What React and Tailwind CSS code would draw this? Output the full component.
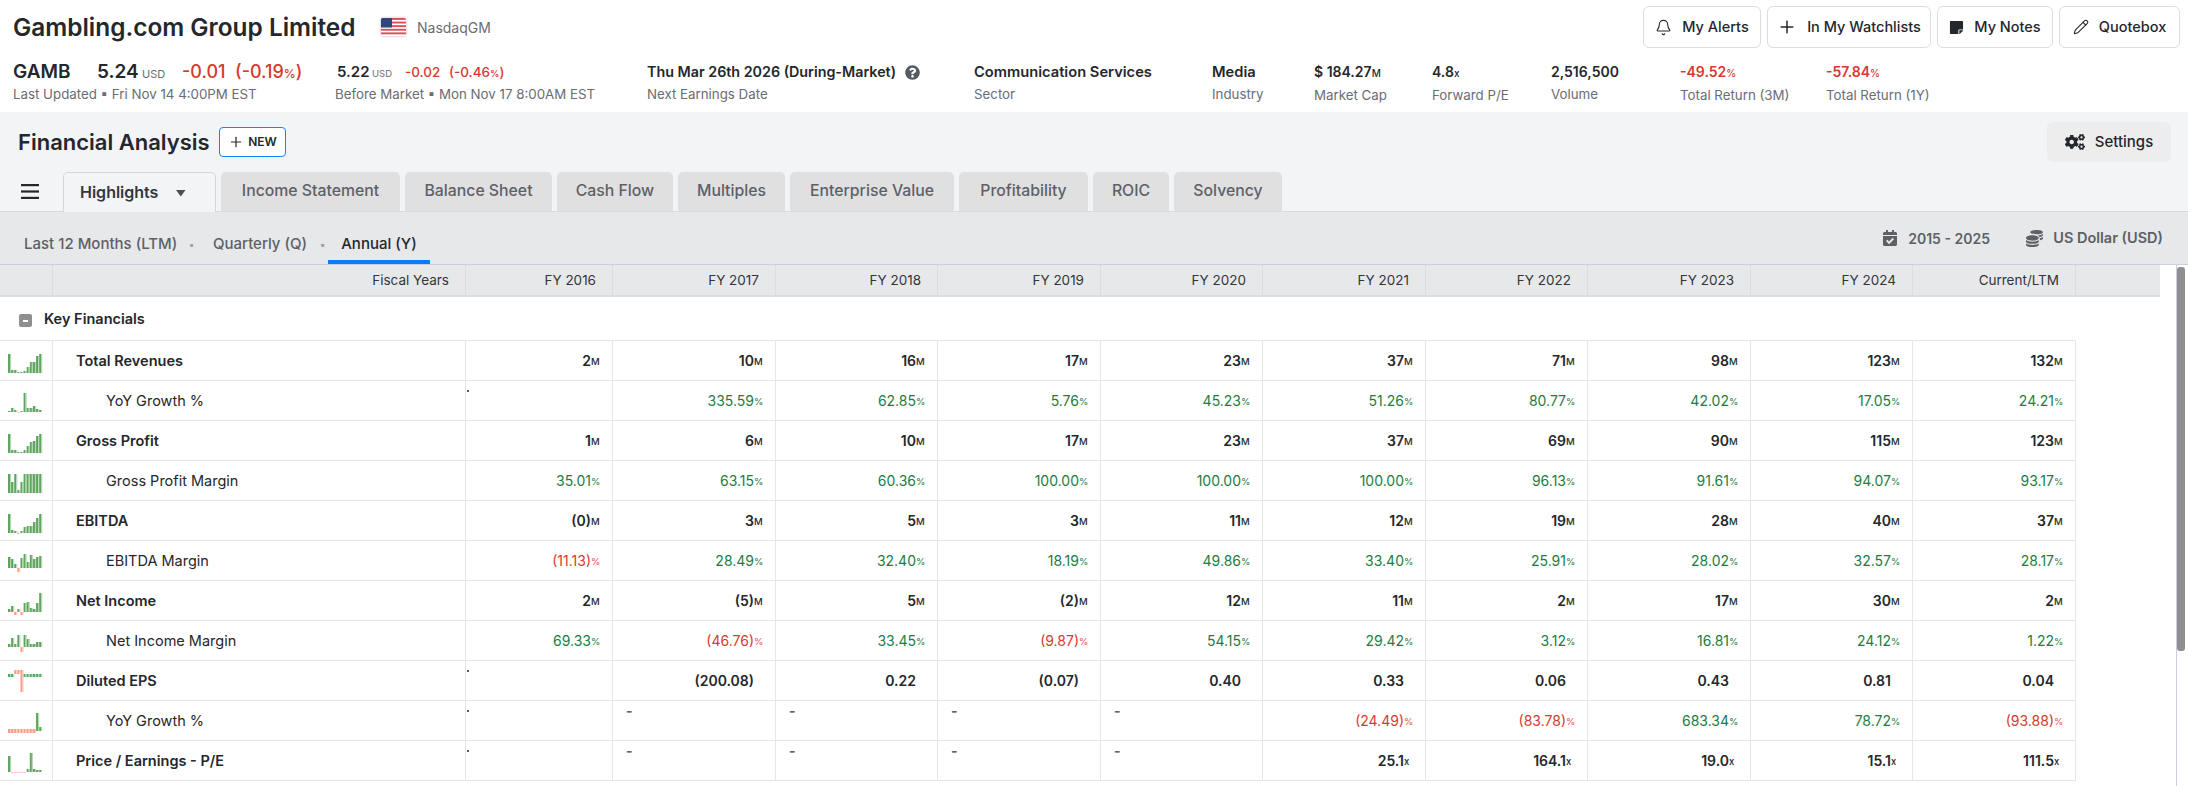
import React from "react";
import { Bell, Plus, Pencil } from "lucide-react";
import { FaStickyNote, FaCogs, FaCalendarCheck, FaCoins, FaQuestionCircle } from "react-icons/fa";

function Spark({ base = 32, bars }) {
  return (
    <svg width="52" height="39" viewBox="0 0 52 39" className="block">
      {bars.map((v, i) => {
        const x = 8 + i * 3.12;
        let y, h, neg;
        if (Array.isArray(v)) {
          [y, h] = v;
          neg = v[2] === "r";
        } else {
          neg = v < 0;
          h = Math.abs(v);
          y = neg ? base : base - h;
        }
        return (
          <g key={i}>
            <rect x={x} y={y} width="2" height={h} fill={neg ? "#ff9a86" : "#5ea55e"} />
            <rect x={x + 2} y={y} width="1.1" height={h} fill={neg ? "#ffc9bd" : "#b4d6b4"} />
          </g>
        );
      })}
    </svg>
  );
}

function Val({ v, u, tone, bold }) {
  const color = tone === "g" ? "text-[#1c7d43]" : tone === "r" ? "text-[#d8392f]" : "text-[#24272c]";
  return (
    <div className="flex items-center justify-end h-full pr-[11px]">
      <span className={`text-[14px] ${bold ? "font-semibold" : "font-normal"} ${color}`}>{v}</span>
      <span className={`w-[10px] text-left text-[9.5px] leading-none mt-[3px] ${bold ? "font-medium" : "font-normal"} ${tone === "r" ? "text-[#e0574c]" : color}`}>{u}</span>
    </div>
  );
}

const COLS = "grid grid-cols-[53px_413px_147px_163px_162px_163px_162px_163px_162px_163px_162px_163px]";

const rows = [
  { label: "Total Revenues", bold: true, base: 32, bars: [19, 3, 3, 1, 1, 2, 6, 11, 11, 17, 19], u: "M",
    vals: ["2", "10", "16", "17", "23", "37", "71", "98", "123", "132"] },
  { label: "YoY Growth %", base: 31, bars: [1, 4, 2, -0.6, 1, 19, 4, 4, 6, 3, 2], u: "%",
    vals: [".", "335.59", "62.85", "5.76", "45.23", "51.26", "80.77", "42.02", "17.05", "24.21"] },
  { label: "Gross Profit", bold: true, base: 32, bars: [19, 3, 3, 1, 1, 3, 7, 11, 12, 17, 19], u: "M",
    vals: ["1", "6", "10", "17", "23", "37", "69", "90", "115", "123"] },
  { label: "Gross Profit Margin", base: 32, bars: [19, 11, 19, 3, 11, 19, 19, 19, 19, 19, 19], u: "%",
    vals: ["35.01", "63.15", "60.36", "100.00", "100.00", "100.00", "96.13", "91.61", "94.07", "93.17"] },
  { label: "EBITDA", bold: true, base: 32, bars: [19, 3, 2, -1, 2, 6, 7, 7, 11, 15, 19], u: "M",
    vals: ["(0)", "3", "5", "3", "11", "12", "19", "28", "40", "37"] },
  { label: "EBITDA Margin", base: 27, bars: [11, 9, 4, -4, 10, 14, 6, 13, 9, 11, 12], u: "%",
    vals: ["(11.13)", "28.49", "32.40", "18.19", "49.86", "33.40", "25.91", "28.02", "32.57", "28.17"] },
  { label: "Net Income", bold: true, base: 31, bars: [3, 6, -3, 3, -3, 9, 10, 4, 3, 9, 19], u: "M",
    vals: ["2", "(5)", "5", "(2)", "12", "11", "2", "17", "30", "2"] },
  { label: "Net Income Margin", base: 26, bars: [3, 9, 3, 12, -5, 12, 8, 3, 3, 5, 5], u: "%",
    vals: ["69.33", "(46.76)", "33.45", "(9.87)", "54.15", "29.42", "3.12", "16.81", "24.12", "1.22"] },
  { label: "Diluted EPS", bold: true, base: 12,
    bars: [[13, 3], [13, 3], [9, 4, "r"], [9, 4, "r"], [9, 22, "r"], [13, 3], [13, 3], [13, 3], [13, 3], [13, 3], [13, 3]], u: "",
    vals: [".", "(200.08)", "0.22", "(0.07)", "0.40", "0.33", "0.06", "0.43", "0.81", "0.04"] },
  { label: "YoY Growth %", base: 30,
    bars: [[28, 4, "r"], [28, 4, "r"], [28, 4, "r"], [28, 4, "r"], [28, 4, "r"], [28, 4, "r"], [28, 4, "r"], [28, 4, "r"], [28, 4, "r"], 18, 4], u: "%",
    vals: [".", "-", "-", "-", "-", "(24.49)", "(83.78)", "683.34", "78.72", "(93.88)"] },
  { label: "Price / Earnings - P/E", bold: true, base: 31, bars: [16, -0.6, -0.6, -0.6, -0.6, -0.6, 3, 19, 3, 2, 2], u: "x",
    vals: [".", "-", "-", "-", "-", "25.1", "164.1", "19.0", "15.1", "111.5"] },
];

function Cell({ row, v }) {
  if (v === ".") {
    return (
      <div className="h-full border-r border-[#e6e6e8] pt-[9px] pl-[1px]">
        <span className="block w-[2px] h-[2px] bg-[#55585e]"></span>
      </div>
    );
  }
  if (v === "-") {
    return (
      <div className="h-full border-r border-[#e6e6e8] pl-[13px] pt-[1px] text-[14px] leading-[18px] font-bold text-[#5f6268]">-</div>
    );
  }
  const neg = v.startsWith("(");
  const tone = row.bold ? undefined : neg ? "r" : "g";
  return (
    <div className="h-full border-r border-[#e6e6e8]">
      <Val v={v} u={row.u} tone={tone} bold={row.bold} />
    </div>
  );
}

function Stat({ w, value, unit, label, red, wide }) {
  return (
    <div className={w}>
      <div className={`${wide ? "text-[14.7px]" : "text-[14px]"} leading-[20px] font-semibold whitespace-nowrap ${red ? "text-[#d8392f]" : "text-[#24272c]"}`}>
        {value}
        {unit && <span className="text-[10px] font-medium">{unit}</span>}
      </div>
      <div className="text-[13.3px] leading-[20px] mt-[2px] text-[#696d74]">{label}</div>
    </div>
  );
}

const topBtn = "flex items-center justify-center gap-[10px] h-[42px] bg-white border border-[#dcdddf] rounded-[6px] text-[14.5px] font-medium text-[#24272c]";
const tabs = [
  ["Income Statement", "w-[179px]"],
  ["Balance Sheet", "w-[147px]"],
  ["Cash Flow", "w-[116px]"],
  ["Multiples", "w-[107px]"],
  ["Enterprise Value", "w-[164px]"],
  ["Profitability", "w-[129px]"],
  ["ROIC", "w-[76px]"],
  ["Solvency", "w-[108px]"],
];

export default function App() {
  return (
    <div className="w-[2188px] h-[786px] overflow-hidden bg-white flex flex-col font-['Inter','Liberation_Sans',sans-serif] text-[#24272c]">
      <header className="h-[112px] shrink-0 flex flex-col">
        <div className="h-[62px] shrink-0 flex items-start justify-between pl-[13px] pr-[8px] pt-[6px]">
          <div className="flex items-center h-[42px]">
            <h1 className="text-[24.4px] font-semibold leading-none w-[368px] whitespace-nowrap">Gambling.com Group Limited</h1>
            <svg width="25" height="18" viewBox="0 0 25 18" className="rounded-[2px] shadow-[0_0_3px_rgba(90,90,120,0.45)]">
              <rect width="25" height="18" fill="#fff" />
              {[0, 1, 2, 3, 4].map((i) => (
                <rect key={i} y={i * 3.6} width="25" height="1.9" fill="#d9505c" />
              ))}
              <rect width="11" height="9.5" fill="#33457c" />
            </svg>
            <span className="ml-[11px] text-[14px] text-[#696d74]">NasdaqGM</span>
          </div>
          <div className="flex gap-[6px]">
            <button className={`${topBtn} w-[118px]`}><Bell size={17} strokeWidth={1.6} />My Alerts</button>
            <button className={`${topBtn} w-[164px]`}><Plus size={20} strokeWidth={1.8} />In My Watchlists</button>
            <button className={`${topBtn} w-[116px]`}><FaStickyNote size={15} className="text-[#24272c]" />My Notes</button>
            <button className={`${topBtn} w-[121px]`}><Pencil size={16} strokeWidth={1.6} />Quotebox</button>
          </div>
        </div>
        <div className="flex pl-[13px]">
          <div className="w-[322px]">
            <div className="flex items-baseline h-[20px] text-[#24272c]">
              <span className="text-[19px] leading-[20px] font-semibold w-[84px]">GAMB</span>
              <span className="text-[19px] leading-[20px] font-semibold w-[45px]">5.24</span>
              <span className="text-[11px] text-[#696d74] w-[40px]">USD</span>
              <span className="text-[18px] leading-[20px] font-medium text-[#d8392f] w-[53px]">-0.01</span>
              <span className="text-[18px] leading-[20px] font-medium text-[#d8392f]">(-0.19<span className="text-[12px]">%</span>)</span>
            </div>
            <div className="text-[13.3px] leading-[20px] mt-[2px] text-[#696d74] whitespace-nowrap">Last Updated ▪ Fri Nov 14 4:00PM EST</div>
          </div>
          <div className="w-[312px]">
            <div className="flex items-baseline h-[20px] pl-[2px]">
              <span className="text-[15px] leading-[20px] font-semibold w-[35px]">5.22</span>
              <span className="text-[9.5px] text-[#696d74] w-[33px]">USD</span>
              <span className="text-[13.5px] leading-[20px] font-medium text-[#d8392f] w-[44px]">-0.02</span>
              <span className="text-[13.5px] leading-[20px] font-medium text-[#d8392f]">(-0.46<span className="text-[9.5px]">%</span>)</span>
            </div>
            <div className="text-[13.3px] leading-[20px] mt-[2px] text-[#696d74] whitespace-nowrap">Before Market ▪ Mon Nov 17 8:00AM EST</div>
          </div>
          <div className="w-[327px]">
            <div className="flex items-center gap-[9px] text-[14.3px] leading-[20px] font-semibold whitespace-nowrap">
              Thu Mar 26th 2026 (During-Market)
              <FaQuestionCircle size={15} className="text-[#565a62]" />
            </div>
            <div className="text-[13.3px] leading-[20px] mt-[2px] text-[#696d74]">Next Earnings Date</div>
          </div>
          <Stat w="w-[238px]" value="Communication Services" label="Sector" wide />
          <Stat w="w-[102px]" value="Media" label="Industry" wide />
          <Stat w="w-[118px]" value="$ 184.27" unit="M" label="Market Cap" />
          <Stat w="w-[119px]" value="4.8" unit="x" label="Forward P/E" />
          <Stat w="w-[129px]" value="2,516,500" label="Volume" />
          <Stat w="w-[146px]" value="-49.52" unit="%" label="Total Return (3M)" red />
          <Stat w="w-[150px]" value="-57.84" unit="%" label="Total Return (1Y)" red />
        </div>
      </header>

      <section className="h-[100px] shrink-0 bg-[#f3f4f6] flex flex-col border-b border-[#d9dadd]">
        <div className="h-[60px] shrink-0 flex items-start justify-between pl-[18px] pr-[17px] pt-[10px]">
          <div className="flex items-center h-[40px]">
            <h2 className="text-[22px] font-semibold leading-none w-[201px] whitespace-nowrap">Financial Analysis</h2>
            <button className="flex items-center gap-[4px] w-[67px] h-[30px] justify-center bg-white border border-[#1a82ff] rounded-[4px] text-[12px] font-semibold">
              <Plus size={16} strokeWidth={1.8} />NEW
            </button>
          </div>
          <button className="flex items-center justify-center gap-[10px] w-[124px] h-[40px] bg-[#ededee] rounded-[6px] text-[15px] font-medium">
            <FaCogs size={20} className="text-[#24272c]" />Settings
          </button>
        </div>
        <div className="flex items-end h-[39px] gap-[5px]">
          <div className="w-[63px] h-full flex items-center pl-[21px]">
            <svg width="18" height="15" viewBox="0 0 18 15">
              <rect width="18" height="2.2" fill="#24272c" />
              <rect y="6.4" width="18" height="2.2" fill="#24272c" />
              <rect y="12.8" width="18" height="2.2" fill="#24272c" />
            </svg>
          </div>
          <div className="-ml-[5px] w-[153px] h-[40px] -mb-[1px] pb-[2px] bg-[#f3f4f6] border border-b-0 border-[#d5d7da] rounded-t-[5px] flex items-center pl-[16px] text-[16px] font-semibold text-[#33363b] relative">
            Highlights
            <svg width="12" height="7" viewBox="0 0 12 7" className="ml-[17px] mt-[3px]"><path d="M1 0h9.5L5.8 6.5z" fill="#4a4d53" /></svg>
          </div>
          {tabs.map(([t, w]) => (
            <div key={t} className={`${w} h-full pb-[2px] bg-[#e0e0e1] rounded-t-[5px] flex items-center justify-center text-[15.8px] font-medium text-[#5d6067]`}>{t}</div>
          ))}
        </div>
      </section>

      <div className="h-[53px] shrink-0 bg-[#e7e8ea] border-b border-[#c9cfdc] flex justify-between pl-[24px] pr-[25px]">
        <div className="flex items-center h-full pt-[12px] text-[15px] font-medium text-[#5d6067]">
          <span className="w-[165px] whitespace-nowrap">Last 12 Months (LTM)</span>
          <span className="w-[24px] text-[10px] text-[#9a9da3]">▪</span>
          <span className="w-[107px] whitespace-nowrap">Quarterly (Q)</span>
          <span className="w-[23px] text-[10px] text-[#9a9da3]">▪</span>
          <span className="h-full w-[102px] -ml-[15px] pt-[4px] flex items-center justify-center whitespace-nowrap border-b-[4px] border-[#0a7cff] text-[#24272c]">Annual (Y)</span>
        </div>
        <div className="flex items-center h-full text-[14.5px] font-semibold text-[#5d6067]">
          <FaCalendarCheck size={16} className="mr-[10px]" />
          <span className="w-[118px] text-[14px] whitespace-nowrap">2015 - 2025</span>
          <FaCoins size={17} className="mr-[10px]" />
          <span className="whitespace-nowrap">US Dollar (USD)</span>
        </div>
      </div>

      <div className="flex-1 min-h-0 flex">
        <div className="w-[2176px] shrink-0">
          <div className="bg-[#e7e8ea] border-b-2 border-[#dcdde0] h-[32px] w-[2160px]">
            <div className={`${COLS} h-full text-[13.5px] text-[#33363b]`}>
              <div className="border-r border-[#dcdde0]"></div>
              <div className="border-r border-[#dcdde0] flex items-center justify-end pr-[16px]">Fiscal Years</div>
              {["FY 2016", "FY 2017", "FY 2018", "FY 2019", "FY 2020", "FY 2021", "FY 2022", "FY 2023", "FY 2024", "Current/LTM"].map((y) => (
                <div key={y} className="border-r border-[#dcdde0] flex items-center justify-end pr-[16px]">{y}</div>
              ))}
            </div>
          </div>
          <div className="h-[44px] border-b border-[#e6e6e8] flex items-center pl-[19px] w-[2076px]">
            <span className="w-[13px] h-[13px] rounded-[2px] bg-[#8f8f91] flex items-center justify-center mt-[4px]">
              <span className="block w-[5px] h-[2px] bg-white"></span>
            </span>
            <span className="ml-[12px] text-[14.5px] font-semibold">Key Financials</span>
          </div>
          {rows.map((r) => (
            <div key={r.label + r.base} className={`${COLS} h-[40px] border-b border-[#e6e6e8] w-[2076px]`}>
              <div className="border-r border-[#e6e6e8]"><Spark base={r.base} bars={r.bars} /></div>
              <div className={`border-r border-[#e6e6e8] flex items-center text-[14.5px] ${r.bold ? "pl-[23px] font-semibold" : "pl-[53px] font-normal"}`}>{r.label}</div>
              {r.vals.map((v, i) => (
                <Cell key={i} row={r} v={v} />
              ))}
            </div>
          ))}
        </div>
        <div className="w-[12px] shrink-0 border-l border-[#c9cfdc] pt-[2px]">
          <div className="w-[8px] h-[384px] rounded-[3px] bg-[#8f8f91]"></div>
        </div>
      </div>
    </div>
  );
}
